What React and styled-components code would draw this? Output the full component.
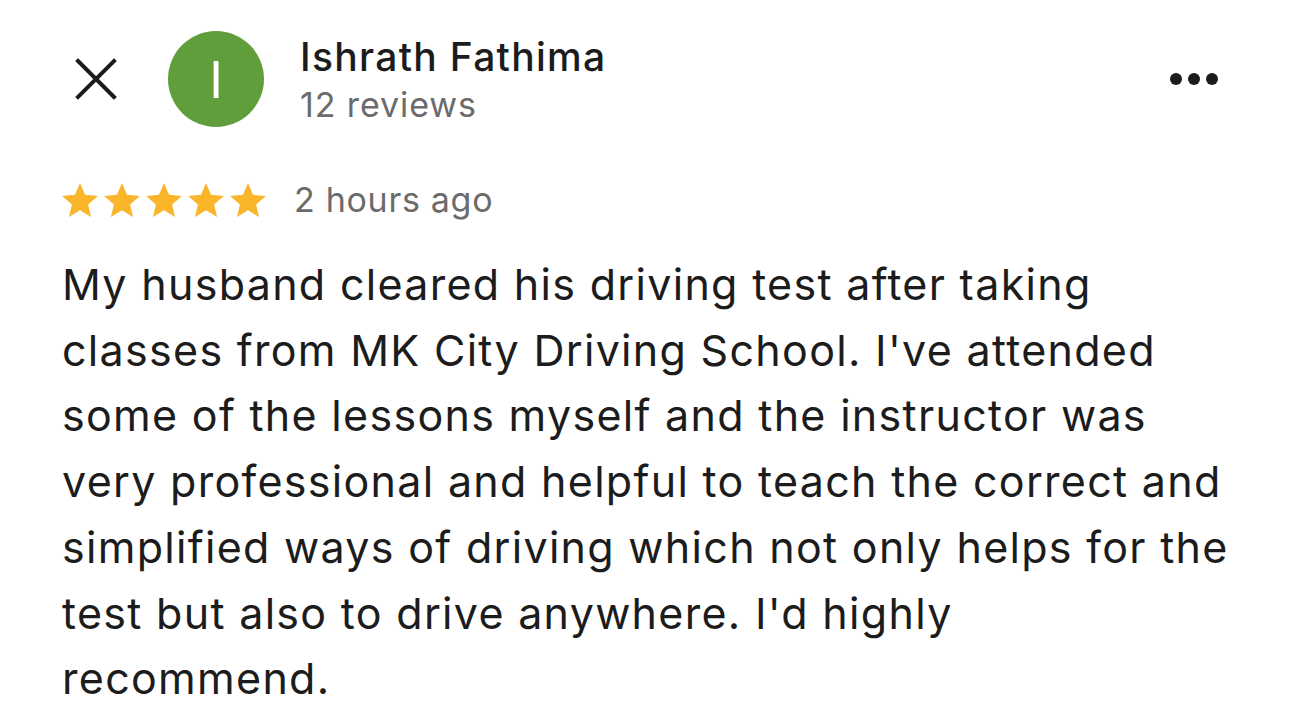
import styled, { createGlobalStyle } from 'styled-components'

const GlobalStyle = createGlobalStyle`
  html, body {
    margin: 0;
    padding: 0;
    background: #ffffff;
  }
  body {
    font-family: Inter, "Noto Sans", "Liberation Sans", sans-serif;
    color: #1f1f1f;
  }
`

const Page = styled.div`
  width: 1290px;
  height: 718px;
  box-sizing: border-box;
  padding: 31px 72px 0 62px;
  overflow: hidden;
  background: #fff;
`

const Header = styled.div`
  display: flex;
  align-items: center;
  height: 96px;
  padding-left: 13px;
`

const CloseButton = styled.button`
  display: flex;
  align-items: center;
  justify-content: center;
  width: 42px;
  height: 42px;
  padding: 0;
  margin-right: 51px;
  border: none;
  background: none;
  cursor: pointer;
`

const Avatar = styled.div`
  width: 96px;
  height: 96px;
  flex: 0 0 96px;
  border-radius: 50%;
  background: #5f9e3a;
  color: #fff;
  display: flex;
  align-items: center;
  justify-content: center;
  font-size: 51px;
  font-weight: 400;
  line-height: 1;
  margin-right: 36px;
`

const Author = styled.div`
  display: flex;
  flex-direction: column;
  flex: 1;
  padding-top: 4px;
`

const Name = styled.div`
  font-size: 39px;
  font-weight: 500;
  line-height: 46px;
  letter-spacing: 1.3px;
  color: #1c1c1c;
`

const Sub = styled.div`
  font-size: 34px;
  line-height: 46px;
  letter-spacing: 0.9px;
  color: #6b6b6b;
  margin-top: 2px;
`

const MoreButton = styled.button`
  display: flex;
  gap: 6px;
  padding: 0;
  border: none;
  background: none;
  cursor: pointer;
`

const Dot = styled.span`
  width: 12px;
  height: 12px;
  border-radius: 50%;
  background: #1c1c1c;
`

const RatingRow = styled.div`
  display: flex;
  align-items: center;
  height: 40px;
  margin-top: 53px;
`

const Stars = styled.div`
  display: flex;
  gap: 6px;
  margin-right: 28px;
`

const Time = styled.span`
  font-size: 34px;
  line-height: 40px;
  letter-spacing: 0.7px;
  color: #6b6b6b;
`

const Body = styled.p`
  margin: 32px 0 0;
  font-size: 43px;
  line-height: 65.7px;
  letter-spacing: 1.3px;
  color: #1c1c1c;
  white-space: nowrap;
`

const Star = () => (
  <svg width="36" height="34" viewBox="2 2 20 19">
    <path fill="#f9b62b" d="M12 17.27L18.18 21l-1.64-7.03L22 9.24l-7.19-.61L12 2 9.19 8.63 2 9.24l5.46 4.73L5.82 21z" />
  </svg>
)

const lines = [
  'My husband cleared his driving test after taking',
  "classes from MK City Driving School. I've attended",
  'some of the lessons myself and the instructor was',
  'very professional and helpful to teach the correct and',
  'simplified ways of driving which not only helps for the',
  "test but also to drive anywhere. I'd highly",
  'recommend.'
]

export default function App() {
  return (
    <Page>
      <GlobalStyle />
      <Header>
        <CloseButton aria-label='Close'>
          <svg width="42" height="42" viewBox="0 0 42 42">
            <path d="M3 3L39 39M39 3L3 39" stroke="#1c1c1c" strokeWidth="4" strokeLinecap="square" />
          </svg>
        </CloseButton>
        <Avatar>I</Avatar>
        <Author>
          <Name>Ishrath Fathima</Name>
          <Sub>12 reviews</Sub>
        </Author>
        <MoreButton aria-label='More'>
          <Dot />
          <Dot />
          <Dot />
        </MoreButton>
      </Header>
      <RatingRow>
        <Stars>
          {[0, 1, 2, 3, 4].map(i => <Star key={i} />)}
        </Stars>
        <Time>2 hours ago</Time>
      </RatingRow>
      <Body>
        {lines.map((line, i) => (
          <span key={i}>{line}{i < lines.length - 1 && <br />}</span>
        ))}
      </Body>
    </Page>
  )
}
